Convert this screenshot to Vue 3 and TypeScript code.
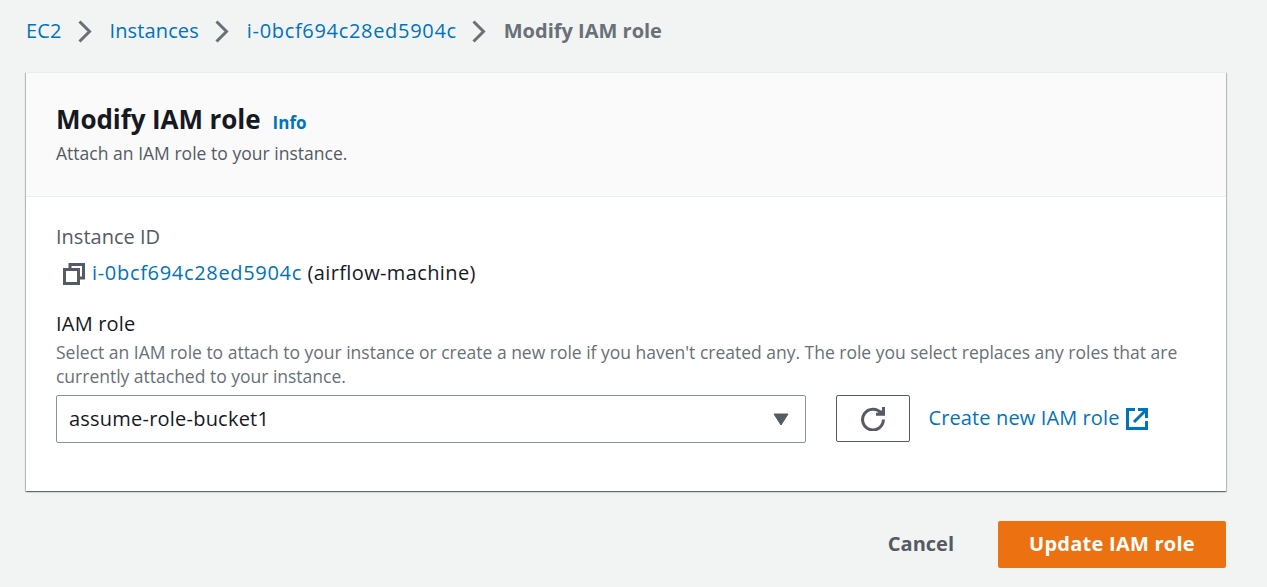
<script setup lang="ts">
const crumbs: string[] = ['EC2', 'Instances', 'i-0bcf694c28ed5904c']
const instanceId = 'i-0bcf694c28ed5904c'
</script>

<template>
  <main class="page">
    <nav class="crumbs">
      <template v-for="c in crumbs" :key="c">
        <a class="link" :class="{ id: c === instanceId }">{{ c }}</a>
        <svg class="chevron" viewBox="0 0 14 24"><path d="M1.5 1.5 L11.5 11.5 L1.5 21.5" /></svg>
      </template>
      <span class="current">Modify IAM role</span>
    </nav>
    <section class="card">
      <header class="card-head">
        <div class="title-row">
          <h1>Modify IAM role</h1>
          <a class="info">Info</a>
        </div>
        <p class="sub">Attach an IAM role to your instance.</p>
      </header>
      <div class="card-body">
        <div class="label muted">Instance ID</div>
        <div class="instance">
          <svg class="copy" viewBox="0 0 22 22"><path d="M7 6V1.5H20.5V15H16M1.5 6.5H15.5V20.5H1.5Z" /></svg>
          <a class="link id">{{ instanceId }}</a>
          <span class="name">(airflow-machine)</span>
        </div>
        <div class="label role">IAM role</div>
        <p class="hint">Select an IAM role to attach to your instance or create a new role if you haven't created any. The role you select replaces any roles that are<br>currently attached to your instance.</p>
        <div class="controls">
          <div class="select">
            <span>assume-role-bucket1</span>
            <svg class="caret" viewBox="0 0 16 13"><path d="M1 1H15L8 12Z" /></svg>
          </div>
          <button class="refresh" aria-label="Refresh">
            <svg viewBox="0 0 24 24"><path d="M20.2 6.2A10.4 10.4 0 1 0 22.4 12.6M22.5 0V7.2H15" /><path class="solid" d="M19 4L22 3V7H18Z" /></svg>
          </button>
          <a class="link create">
            <span>Create new IAM role</span>
            <svg viewBox="0 0 22 22"><path d="M9 1.5H1.5V20.5H20.5V13M12 1.5H20.5V10M20.5 1.5L8 14" /></svg>
          </a>
        </div>
      </div>
    </section>
    <footer class="actions">
      <button class="cancel">Cancel</button>
      <button class="primary">Update IAM role</button>
    </footer>
  </main>
</template>

<style>
body { background: #f2f3f3; }
</style>
<style scoped>
.page { box-sizing: border-box; height: 587px; overflow: hidden; background: #f2f3f3; font-family: "Open Sans", "Noto Sans", sans-serif; font-size: 20px; line-height: 30px; color: #16191f; }
svg { fill: none; stroke: #545b64; stroke-width: 3; flex: none; }
p, h1 { margin: 0; }
button { padding: 0; font: inherit; border: 0; background: none; }
.link { color: #0073bb; white-space: nowrap; letter-spacing: 0.12px; }
.link.id { letter-spacing: 0.68px; }
.crumbs { display: flex; align-items: center; height: 72px; padding: 0 0 10px 26px; box-sizing: border-box; }
.chevron { width: 14px; height: 24px; margin: 2px 17.5px 0 16.5px; stroke: #687078; }
.id + .chevron { margin-left: 15.5px; }
.current { color: #687078; font-weight: 700; }
.card { box-sizing: border-box; margin-left: 26px; width: 1200px; height: 419px; background: #fff; border-top: 1px solid #eaeded; box-shadow: 0 1px 1px rgba(0, 28, 36, .4), 1px 1px 1px rgba(0, 28, 36, .2), -1px 1px 1px rgba(0, 28, 36, .2); }
.card-head { box-sizing: border-box; height: 124px; padding: 27px 30px 0; background: #fafafa; border-bottom: 1px solid #eaeded; }
.title-row { display: flex; align-items: baseline; height: 38px; }
h1 { font-size: 26px; line-height: 38px; font-weight: 700; letter-spacing: -0.08px; }
.info { margin-left: 12px; font-size: 17px; font-weight: 700; color: #0073bb; letter-spacing: 0.1px; }
.sub { font-size: 17.5px; line-height: 30px; color: #545b64; letter-spacing: 0.02px; }
.card-body { padding: 25px 30px 0; }
.muted { color: #545b64; }
.instance { display: flex; align-items: center; height: 42px; }
.copy { width: 22px; height: 22px; margin: 2px 7px 0; }
.name { margin-left: 5.5px; letter-spacing: 0.38px; }
.role { margin-top: 15px; letter-spacing: 0.2px; }
.hint { margin-top: 1px; font-size: 17.5px; line-height: 24px; color: #687078; white-space: nowrap; letter-spacing: -0.008px; }
.controls { display: flex; margin-top: 7px; }
.select { box-sizing: border-box; display: flex; align-items: center; justify-content: space-between; width: 750px; height: 48px; padding: 0 16px 0 12px; border: 1px solid #879596; border-radius: 2px; letter-spacing: 0.22px; }
.caret { width: 16px; height: 13px; fill: #545b64; stroke-width: 1; stroke-linejoin: round; }
.refresh { box-sizing: border-box; width: 74px; height: 47px; margin-left: 30px; border: 1px solid #545b64; border-radius: 2px; display: flex; align-items: center; justify-content: center; }
.refresh svg { width: 24px; height: 24px; }
.refresh .solid { fill: #545b64; stroke: none; }
.create { display: flex; align-items: center; height: 47px; margin-left: 18.5px; }
.create span { padding-bottom: 2px; }
.create svg { width: 22px; height: 22px; margin-left: 6.5px; stroke: #0073bb; }
.actions { display: flex; justify-content: flex-end; align-items: center; width: 1226px; margin-top: 30px; font-weight: 700; }
.cancel { color: #545b64; margin-right: 44px; padding-bottom: 2px; }
.primary { width: 228px; height: 47px; padding-bottom: 2px; color: #fff; background: #ec7211; border-radius: 2px; letter-spacing: 0.25px; }
</style>
